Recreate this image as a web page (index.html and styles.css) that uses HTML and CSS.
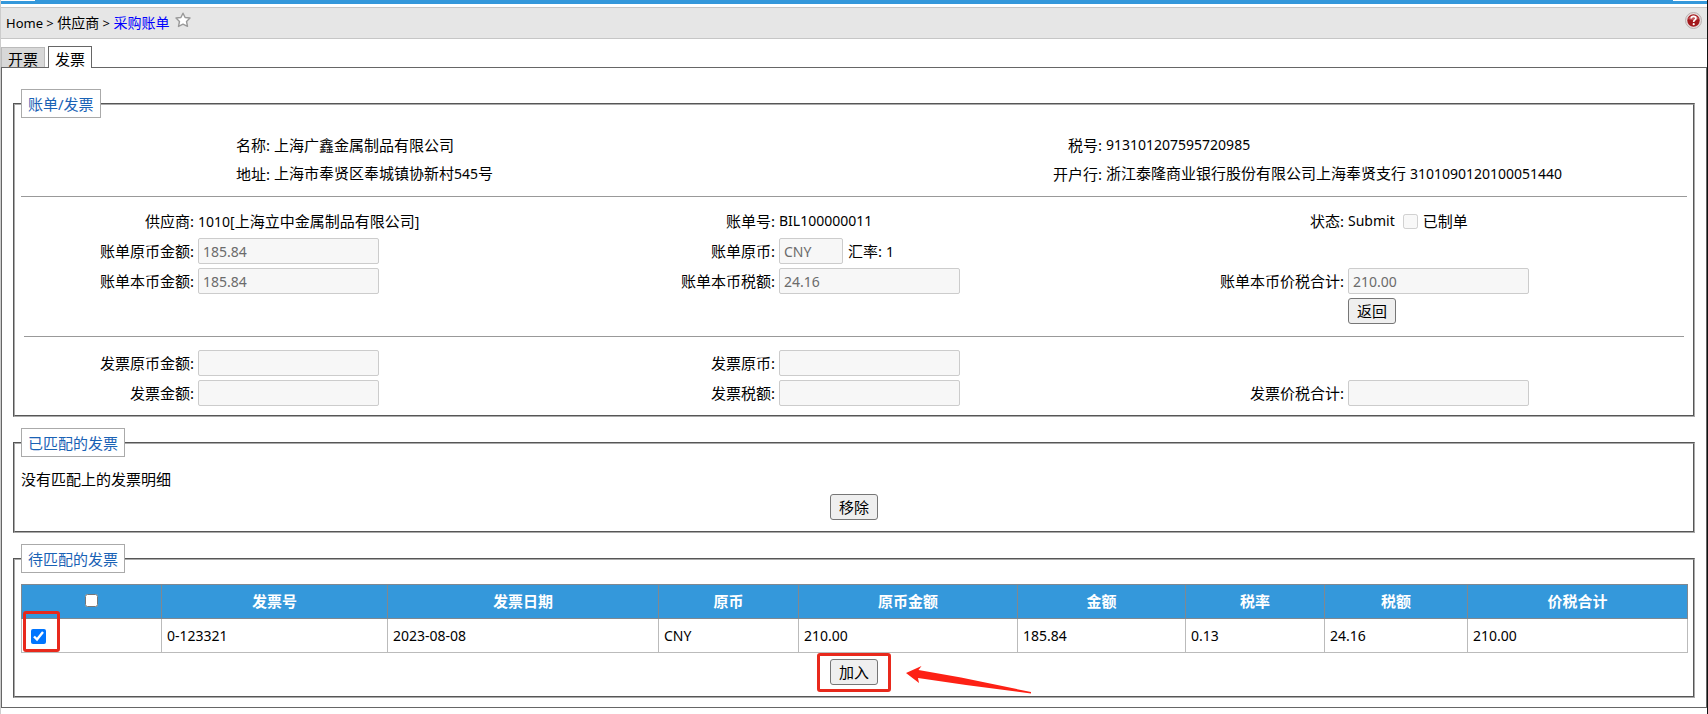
FILE: index.html
```
<!DOCTYPE html>
<html lang="zh-CN">
<head>
<meta charset="utf-8">
<title>采购账单</title>
<link rel="stylesheet" href="styles.css">
</head>
<body>
<div class="topbar"><span class="topbar-edge"></span><span class="topbar-edge"></span></div>
<header class="crumbs">
  <nav class="crumb-nav"><span>Home &gt; <span class="crumb-text">供应商</span> &gt; </span><a class="crumb-link crumb-text" href="#">采购账单</a>
    <svg class="star" viewBox="0 0 16 16" width="16" height="16"><path d="M8 1.2 L10.1 5.5 L15 6 L11.5 9.5 L12.5 14.4 L8 12.2 L3.5 14.4 L4.5 9.5 L1 6 L5.9 5.5 Z" fill="#fff" stroke="#999" stroke-width="1.4" stroke-linejoin="round"/></svg>
  </nav>
  <svg class="help" viewBox="0 0 17 17" width="17" height="17"><circle cx="8.500" cy="8.500" r="8" fill="#e6dcdc" stroke="#b9b0b0"/><circle cx="8.500" cy="8.500" r="6.200" fill="#a3181c"/><path d="M3 7 A6 6 0 0 1 14 7 Q8 9 3 7Z" fill="#c4555a"/><path d="M6.200 6.500 Q6.200 4.300 8.500 4.300 Q10.900 4.300 10.900 6.300 Q10.900 7.600 9.500 8.300 Q8.700 8.800 8.700 10" fill="none" stroke="#fff" stroke-width="1.700"/><circle cx="8.700" cy="12.200" r="1.100" fill="#fff"/></svg>
</header>
<div class="tabs" role="tablist">
  <button class="tab" type="button" role="tab" aria-selected="false">开票</button>
  <button class="tab tab-active" type="button" role="tab" aria-selected="true">发票</button>
</div>
<main class="panel">
  <fieldset class="group">
    <legend class="legend">账单/发票</legend>
    <div class="company">
      <span class="label">名称:</span><span>上海广鑫金属制品有限公司</span>
      <span class="label">税号:</span><span class="num">913101207595720985</span>
      <span class="label">地址:</span><span>上海市奉贤区奉城镇协新村<span class="num">545</span>号</span>
      <span class="label">开户行:</span><span>浙江泰隆商业银行股份有限公司上海奉贤支行 <span class="num">3101090120100051440</span></span>
    </div>
    <hr class="rule">
    <div class="fields">
      <span class="label">供应商:</span><span><span class="num">1010[</span>上海立中金属制品有限公司<span class="num">]</span></span>
      <span class="label">账单号:</span><span class="num">BIL100000011</span>
      <span class="label">状态:</span><span class="status"><span class="num">Submit</span><input class="check" type="checkbox" id="made" disabled><label for="made">已制单</label></span>

      <label class="label" for="f1">账单原币金额:</label><input class="box" id="f1" type="text" value="185.84" disabled>
      <label class="label" for="f2">账单原币:</label><span class="pair"><input class="box box-short" id="f2" type="text" value="CNY" disabled><span>汇率: <span class="num">1</span></span></span>
      <span></span><span></span>

      <label class="label" for="f3">账单本币金额:</label><input class="box" id="f3" type="text" value="185.84" disabled>
      <label class="label" for="f4">账单本币税额:</label><input class="box" id="f4" type="text" value="24.16" disabled>
      <label class="label" for="f5">账单本币价税合计:</label><input class="box" id="f5" type="text" value="210.00" disabled>
      <button class="btn btn-back" type="button">返回</button>
    </div>
    <hr class="rule rule-inset">
    <div class="fields">
      <label class="label" for="g1">发票原币金额:</label><input class="box" id="g1" type="text" disabled>
      <label class="label" for="g2">发票原币:</label><input class="box" id="g2" type="text" disabled>
      <span></span><span></span>
      <label class="label" for="g3">发票金额:</label><input class="box" id="g3" type="text" disabled>
      <label class="label" for="g4">发票税额:</label><input class="box" id="g4" type="text" disabled>
      <label class="label" for="g5">发票价税合计:</label><input class="box" id="g5" type="text" disabled>
    </div>
  </fieldset>

  <fieldset class="group">
    <legend class="legend">已匹配的发票</legend>
    <p class="empty">没有匹配上的发票明细</p>
    <div class="actions"><button class="btn" type="button">移除</button></div>
  </fieldset>

  <fieldset class="group">
    <legend class="legend">待匹配的发票</legend>
    <table class="grid">
      <colgroup><col class="c-pick"><col class="c-no"><col class="c-date"><col class="c-cur"><col class="c-orig"><col class="c-amt"><col class="c-rate"><col class="c-tax"><col class="c-total"></colgroup>
      <thead><tr><th><input class="check check-all" type="checkbox" aria-label="全选"></th><th>发票号</th><th>发票日期</th><th>原币</th><th>原币金额</th><th>金额</th><th>税率</th><th>税额</th><th>价税合计</th></tr></thead>
      <tbody><tr><td><span class="marked"><input class="check" type="checkbox" aria-label="选择 0-123321" checked></span></td><td>0-123321</td><td>2023-08-08</td><td>CNY</td><td>210.00</td><td>185.84</td><td>0.13</td><td>24.16</td><td>210.00</td></tr></tbody>
    </table>
    <div class="actions actions-join"><span class="marked marked-join"><button class="btn" type="button">加入</button>
      <svg class="arrow" viewBox="0 0 126 29" width="126" height="29"><path d="M0 8 L15.500 1 L12.500 5 L55 12.500 L125 27 L125 28.500 L60 20 L12 13 L13 18 Z" fill="#fd2115"/></svg></span></div>
  </fieldset>
</main>
</body>
</html>
```
FILE: styles.css
```
* { box-sizing: border-box; }

body {
  margin: 0;
  min-height: 100vh;
  border-left: 1px solid #ccc;
  border-right: 1px solid #111;
  background: #fff;
  color: #000;
  font: 15px/22px "Noto Sans", "Noto Sans CJK SC", sans-serif;
}

button, input { font-family: inherit; }

.topbar {
  display: flex;
  justify-content: space-between;
  height: 4px;
  margin-bottom: 3px;
  background: #3498db;
}
.topbar-edge { width: 34px; height: 1px; background: #fff; }

.crumbs {
  display: flex;
  justify-content: space-between;
  height: 32px;
  padding: 4px 5px 0;
  border: solid #c6c6c6;
  border-width: 1px 0;
  background: #e6e6e6;
  font-size: 13px;
}
.crumb-nav { line-height: 20px; white-space: nowrap; }
.crumb-text { font-size: 14px; }
.crumb-link { color: #00f; text-decoration: none; }
.star { margin-left: 2px; }

.tabs { display: flex; align-items: flex-end; gap: 3px; margin-top: 7px; }
.tab {
  height: 20px;
  padding: 0 6px;
  border: 1px solid #bbb;
  border-bottom: 0;
  background: #d8d8d8;
  color: #000;
  font-size: 15px;
  line-height: 22px;
}
.tab-active {
  height: 22px;
  padding: 1px 6px 0;
  border-color: #666;
  background: #fff;
  position: relative;
  margin-bottom: -1px;
}

.panel {
  padding: 21px 11px 9px;
  border: 1px solid #666;
}

.group {
  min-width: 0;
  margin: 0 0 11px;
  padding: 11px 6px 9px;
  border: 2px groove #ccc;
  border-color: #aaa;
}
.group:last-child { margin-bottom: 0; }
.legend {
  height: 29px;
  padding: 3px 6px 0;
  border: 1px solid #aaa;
  color: #1a62b5;
}

.company, .fields { display: grid; align-items: center; column-gap: 4px; }
.company {
  grid-template-columns: 249fr 578fr 246fr 581fr;
  grid-auto-rows: 29px;
  padding-top: 1px;
}
.fields {
  grid-template-columns: 173fr 448fr 125fr 425fr 136fr 339fr;
  grid-auto-rows: 26px;
  row-gap: 4px;
}
.label { text-align: right; white-space: nowrap; }
.num { font-size: 14px; }
.status, .pair { display: flex; align-items: center; gap: 5px; }

.box {
  width: 181px;
  height: 26px;
  padding: 0 4px;
  border: 1px solid #ccc;
  border-radius: 2px;
  background: #f7f7f7;
  color: #6b6b6b;
  font-size: 14px;
}
.box-short { width: 64px; }

.rule {
  height: 2px;
  margin: 8px 0 10px;
  border: solid #999;
  border-width: 1px 0 0;
}
.rule-inset { margin: 12px 3px; }

.btn {
  height: 26px;
  padding: 0 8px;
  border: 1px solid #767676;
  border-radius: 3px;
  background: #efefef;
  color: #000;
  font-size: 15px;
  line-height: 22px;
}
.btn-back { grid-column: 6; justify-self: start; }

.check { width: 15px; height: 15px; margin: 0; }
.status .check { margin-left: 3px; }
.check-all { width: 13px; height: 13px; }

.empty { margin: 0 0 4px; }
.actions { display: flex; justify-content: center; margin-bottom: 2px; }
.actions-join { margin-top: 6px; }

.grid { width: 100%; border-collapse: collapse; table-layout: fixed; }
.grid th {
  height: 34px;
  padding: 0 0 2px;
  border: 1px solid #808890;
  background: #3498db;
  color: #fff;
  font-weight: bold;
}
.grid td {
  height: 34px;
  padding: 0 5px;
  border: 1px solid #bbb;
  font-size: 14px;
}
.c-pick, .c-cur { width: 140px; }
.c-no { width: 226px; }
.c-date { width: 271px; }
.c-orig { width: 219px; }
.c-amt { width: 168px; }
.c-rate { width: 139px; }
.c-tax { width: 143px; }
.c-total { width: 220px; }

.marked { position: relative; display: inline-flex; vertical-align: middle; margin-left: 4px; }
.marked::after {
  content: "";
  position: absolute;
  inset: -18px -14px -8px -8px;
  border: 3px solid #e8291c;
  border-radius: 3px;
  pointer-events: none;
}
.marked-join { margin-left: 0; }
.marked-join::after { inset: -6px -13px -7px; }
.arrow { position: absolute; left: 76px; top: 6px; }
```
